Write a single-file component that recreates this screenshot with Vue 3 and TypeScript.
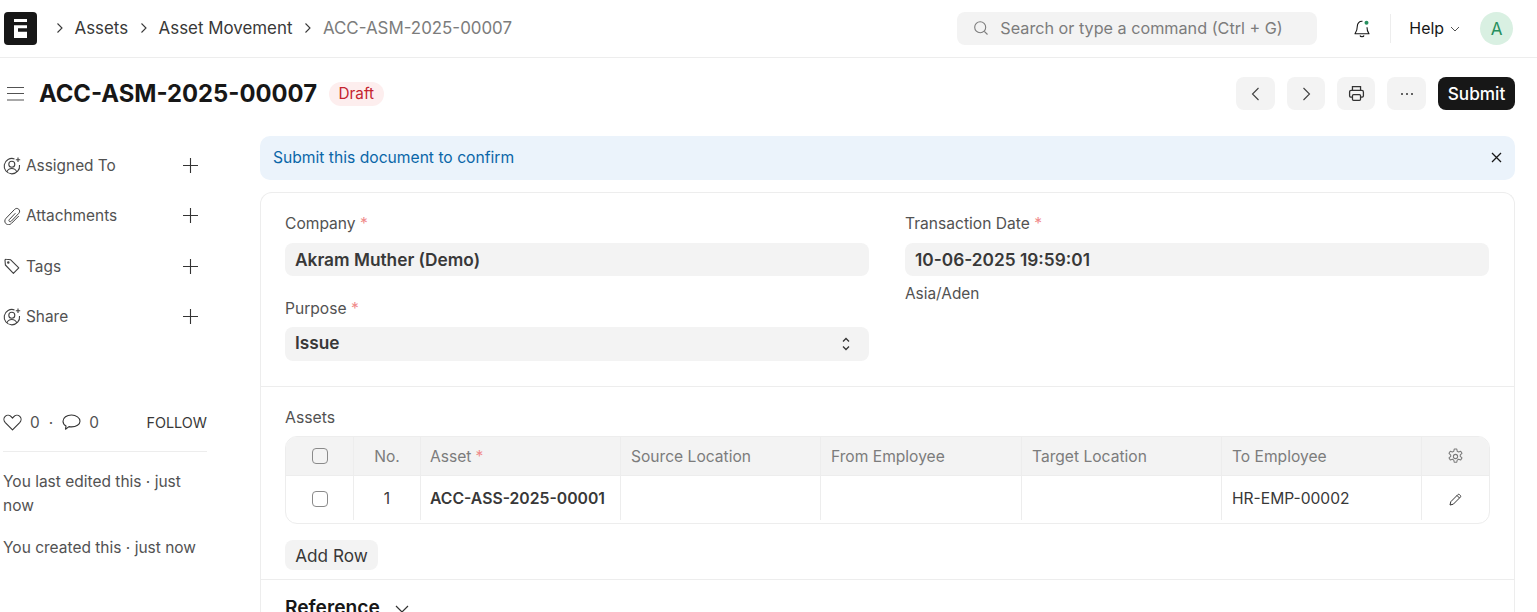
<template>
  <div class="page">
    <header class="navbar">
      <div class="logo">
        <svg width="13" height="19" viewBox="0 0 13 19"><path d="M0 0h13v3H0zM0 6.300h13v3H4v3.500h9V19H0z" fill="#fff" /></svg>
      </div>
      <nav class="crumbs">
        <svg class="crumb-arrow" width="8" height="12" viewBox="0 0 8 12"><path d="M1.500 1.500 6 6l-4.500 4.500" /></svg>
        <span class="crumb">Assets</span>
        <svg class="crumb-arrow" width="8" height="12" viewBox="0 0 8 12"><path d="M1.500 1.500 6 6l-4.500 4.500" /></svg>
        <span class="crumb">Asset Movement</span>
        <svg class="crumb-arrow" width="8" height="12" viewBox="0 0 8 12"><path d="M1.500 1.500 6 6l-4.500 4.500" /></svg>
        <span class="crumb crumb-last">ACC-ASM-2025-00007</span>
      </nav>
      <div class="search">
        <svg width="16" height="16" viewBox="0 0 16 16" fill="none" stroke="#7c7c7c" stroke-width="1.100"><circle cx="7.200" cy="7.200" r="5.500" /><path d="m11.300 11.300 3.200 3.200" /></svg>
        <span>Search or type a command (Ctrl + G)</span>
      </div>
      <div class="bell">
        <svg width="18" height="20" viewBox="0 0 18 20" fill="none" stroke="#171717" stroke-width="1.100">
          <path d="M9.500 2.300C6.300 2 4.300 4.400 4.300 7.300c0 4.500-1.800 6.400-2.300 7.400h14c-.5-1-2-2.500-2-6.500" stroke-linejoin="round" />
          <path d="M7 16.500c.4 1.600 3.600 1.600 4 0" />
          <circle cx="13.500" cy="3.700" r="2" fill="#278f5e" stroke="none" />
        </svg>
      </div>
      <div class="nav-divider"></div>
      <div class="help">
        Help
        <svg width="10" height="6" viewBox="0 0 10 6" fill="none" stroke="#525252"><path d="m1 1 4 4 4-4" /></svg>
      </div>
      <div class="avatar">A</div>
    </header>

    <div class="page-head">
      <div class="head-left">
        <svg class="menu-icon" width="17" height="15" viewBox="0 0 17 15" stroke="#525252" stroke-width="1.200"><path d="M0 1.500h17M0 7.500h17M0 14h17" /></svg>
        <h1>ACC-ASM-2025-00007</h1>
        <span class="badge">Draft</span>
      </div>
      <div class="head-actions">
        <button class="icon-btn nav-btn">
          <svg width="9" height="14" viewBox="0 0 9 14" fill="none" stroke="#404040" stroke-width="1.100"><path d="M7.500 1 1.500 7l6 6" /></svg>
        </button>
        <button class="icon-btn nav-btn">
          <svg width="9" height="14" viewBox="0 0 9 14" fill="none" stroke="#404040" stroke-width="1.100"><path d="m1.500 1 6 6-6 6" /></svg>
        </button>
        <button class="icon-btn">
          <svg width="17" height="17" viewBox="0 0 16 16" fill="none" stroke="#333" stroke-width="1.200"><path d="M4.200 5V1.500h7.600V5M4 11.500H2.500a1.500 1.500 0 0 1-1-1.300V6.500A1.500 1.500 0 0 1 3 5h10a1.500 1.500 0 0 1 1.500 1.500v3.700a1.500 1.500 0 0 1-1.200 1.300H12" /><rect x="4.200" y="9" width="7.600" height="5.500" rx="1" /></svg>
        </button>
        <button class="icon-btn more-btn">
          <svg width="14" height="4" viewBox="0 0 14 4" fill="#333"><circle cx="2" cy="2" r="1" /><circle cx="7" cy="2" r="1" /><circle cx="12" cy="2" r="1" /></svg>
        </button>
        <button class="submit-btn">Submit</button>
      </div>
    </div>

    <div class="body">
      <aside class="sidebar">
        <div v-for="item in sideItems" :key="item.label" class="side-row">
          <span class="side-label">
            <svg v-if="item.icon === 'user'" class="side-icon" width="18" height="18" viewBox="0 0 18 18" fill="none" stroke="#404040" stroke-width="1.100">
              <path d="M11.500 1.900A7.700 7.700 0 1 0 16.500 8" />
              <circle cx="8.800" cy="7.300" r="3" />
              <path d="M3.700 15c1-2.400 2.800-3.500 5.100-3.500s4.100 1.100 5.100 3.500" />
              <path d="M15 .5v4.500M12.800 2.800h4.400" />
            </svg>
            <svg v-else-if="item.icon === 'clip'" class="side-icon" width="18" height="18" viewBox="0 0 18 18" fill="none" stroke="#404040" stroke-width="1">
              <path d="M12.400 6.200 6.300 12.600c-1.200 1.400.6 2.900 2 1.600l7.500-7.900c2.600-2.900-1.500-6.700-4.200-3.900L3 11.300c-3.600 3.900 1.800 8.900 5.500 5L15.800 9" />
            </svg>
            <svg v-else class="side-icon" width="18" height="18" viewBox="0 0 18 18" fill="none" stroke="#404040" stroke-width="1.100" stroke-linejoin="round">
              <path d="M2 3.200 2.400 8l8 8.300 5.400-5.500L7.700 2.800l-4.500-.5A1 1 0 0 0 2 3.200z" />
              <circle cx="5.300" cy="5.600" r=".7" />
            </svg>
            {{ item.label }}
          </span>
          <svg width="15" height="15" viewBox="0 0 15 15" stroke="#333" stroke-width="1.100"><path d="M7.500 0v15M0 7.500h15" /></svg>
        </div>

        <div class="likes">
          <span class="like-group">
            <svg width="19" height="17" viewBox="0 0 19 17" fill="none" stroke="#333" stroke-width="1.100" stroke-linejoin="round"><path d="M9.500 15.800 2.300 8.600C.4 6.500.6 3.800 2.200 2.300c1.800-1.500 4.600-1.300 6.200.5l1.100 1.300 1.100-1.300c1.600-1.800 4.400-2 6.200-.5 1.600 1.500 1.800 4.200-.1 6.300z" /></svg>
            0
            <span class="dot">·</span>
            <svg width="19" height="17" viewBox="0 0 19 17" fill="none" stroke="#333" stroke-width="1.100" stroke-linejoin="round"><path d="M9.500 1C4.800 1 1 3.500 1 7.200c0 2 1.200 3.700 3 4.700l-.5 3.300 3.500-2.600c.8.200 1.600.3 2.500.3 4.700 0 8.500-2.400 8.500-5.700S14.200 1 9.500 1z" /></svg>
            0
          </span>
          <span class="follow">FOLLOW</span>
        </div>
        <div class="side-rule"></div>
        <p class="activity">You last edited this · just now</p>
        <p class="activity">You created this · just now</p>
      </aside>

      <main class="main">
        <div class="alert">
          <span>Submit this document to confirm</span>
          <svg width="11" height="11" viewBox="0 0 11 11" stroke="#171717" stroke-width="1.300"><path d="m1 1 9 9M10 1l-9 9" /></svg>
        </div>

        <div class="card">
          <section class="fields">
            <div class="col">
              <div class="field">
                <label>Company <i>*</i></label>
                <div class="input">Akram Muther (Demo)</div>
              </div>
              <div class="field field-purpose">
                <label>Purpose <i>*</i></label>
                <div class="input select">
                  Issue
                  <svg class="updown" width="10" height="16" viewBox="0 0 10 16" fill="none" stroke="#333" stroke-width="1.300"><path d="m2 5.500 3-3 3 3M2 10.500l3 3 3-3" /></svg>
                </div>
              </div>
            </div>
            <div class="col">
              <div class="field">
                <label>Transaction Date <i>*</i></label>
                <div class="input">10-06-2025 19:59:01</div>
                <div class="tz">Asia/Aden</div>
              </div>
            </div>
          </section>

          <section class="assets">
            <div class="assets-label">Assets</div>
            <div class="table">
              <div class="tr thead">
                <div class="td center"><span class="check"></span></div>
                <div class="td center">No.</div>
                <div class="td">Asset <i>*</i></div>
                <div v-for="h in headers" :key="h" class="td">{{ h }}</div>
                <div class="td center">
                  <svg width="17" height="17" viewBox="0 0 16 16" fill="none" stroke="#7c7c7c" stroke-width="1" stroke-linejoin="round">
                    <circle cx="8" cy="8" r="2" />
                    <path d="M6.800 1h2.400l.4 2 1.300.7 2-.7 1.200 2-1.600 1.400v1.500l1.600 1.400-1.200 2-2-.7-1.300.8-.4 2H6.800l-.4-2-1.300-.8-2 .7-1.200-2 1.600-1.400V6.600L1.900 5l1.200-2 2 .7 1.300-.7z" />
                  </svg>
                </div>
              </div>
              <div class="tr tbody">
                <div class="td center"><span class="check"></span></div>
                <div class="td center">1</div>
                <div class="td strong">ACC-ASS-2025-00001</div>
                <div class="td"></div>
                <div class="td"></div>
                <div class="td"></div>
                <div class="td">HR-EMP-00002</div>
                <div class="td center">
                  <svg class="pencil" width="13" height="13" viewBox="0 0 13 13" fill="none" stroke="#333" stroke-width="1" stroke-linejoin="round"><path d="M1 12l.8-3.300 7-7c.6-.5 1.300-.5 1.800 0l.7.700c.5.600.5 1.300 0 1.800l-7 7zM8 2.500l2.500 2.500" /></svg>
                </div>
              </div>
            </div>
            <button class="add-row">Add Row</button>
          </section>

          <section class="reference">
            <h2>Reference</h2>
            <svg class="ref-chevron" width="14" height="8" viewBox="0 0 14 8" fill="none" stroke="#333" stroke-width="1.200"><path d="m1 1 6 6 6-6" /></svg>
          </section>
        </div>
      </main>
    </div>
  </div>
</template>

<script setup lang="ts">
const sideItems = [
  { label: 'Assigned To', icon: 'user' },
  { label: 'Attachments', icon: 'clip' },
  { label: 'Tags', icon: 'tag' },
  { label: 'Share', icon: 'user' },
]

const headers = ['Source Location', 'From Employee', 'Target Location', 'To Employee']
</script>

<style>
html,
body {
  margin: 0;
  height: 612px;
  overflow: hidden;
  background: #fff;
}
</style>

<style scoped>
.page {
  font-family: Inter, 'Liberation Sans', sans-serif;
  color: #171717;
  height: 612px;
  overflow: hidden;
}

.navbar {
  display: flex;
  align-items: center;
  height: 57px;
  border-bottom: 1px solid #ededed;
  padding: 0 24px 0 4px;
}

.logo {
  width: 33px;
  height: 33px;
  border-radius: 4px;
  background: #171717;
  display: flex;
  align-items: center;
  justify-content: center;
}

.crumbs {
  display: flex;
  align-items: center;
  margin-left: 19px;
  font-size: 16.900px;
  line-height: 20px;
  margin-top: -1px;
  flex: 1;
}

.crumb-arrow {
  fill: none;
  stroke: #383838;
  stroke-width: 1.100;
  margin-right: 10.500px;
}

.crumb {
  color: #383838;
  margin-right: 12px;
}

.crumb-last {
  color: #7c7c7c;
}

.search {
  width: 360px;
  height: 33px;
  box-sizing: border-box;
  border-radius: 8px;
  background: #f3f3f3;
  display: flex;
  align-items: center;
  gap: 11px;
  padding: 0 0 1px 16px;
  color: #7c7c7c;
  font-size: 16.200px;
}

.bell {
  margin-left: 36px;
  display: flex;
}

.nav-divider {
  width: 1px;
  height: 29px;
  background: #ededed;
  margin-left: 19px;
}

.help {
  display: flex;
  align-items: center;
  gap: 6px;
  margin-left: 18px;
  font-size: 15.900px;
}

.avatar {
  width: 33px;
  height: 33px;
  border-radius: 50%;
  background: #d9f0e2;
  color: #278f5e;
  font-size: 17px;
  display: flex;
  align-items: center;
  justify-content: center;
  margin-left: 20px;
}

.page-head {
  display: flex;
  align-items: center;
  justify-content: space-between;
  height: 71px;
  padding: 0 22px 0 7px;
}

.head-left {
  display: flex;
  align-items: center;
}

.menu-icon {
  margin-right: 15px;
}

h1 {
  margin: 0;
  font-size: 23.800px;
  font-weight: 700;
  line-height: 30px;
  letter-spacing: 0;
}

.badge {
  margin-left: 12px;
  height: 24px;
  padding: 0 9.500px;
  border-radius: 12px;
  background: #fdeeee;
  color: #c4242f;
  font-size: 15.300px;
  display: flex;
  align-items: center;
}

.head-actions {
  display: flex;
  align-items: center;
  gap: 12px;
}

.icon-btn {
  width: 38px;
  height: 33px;
  border: 0;
  border-radius: 8px;
  background: #f3f3f3;
  display: flex;
  align-items: center;
  justify-content: center;
  padding: 0;
}

.nav-btn:first-child,
.more-btn {
  width: 39px;
}

.submit-btn {
  width: 77px;
  height: 33px;
  border: 0;
  border-radius: 8px;
  background: #171717;
  color: #fff;
  font: 500 17.200px Inter, 'Liberation Sans', sans-serif;
  padding: 0;
}

.body {
  display: flex;
  padding-right: 22px;
}

.sidebar {
  width: 207px;
  margin-right: 53px;
  flex: none;
  padding-top: 11.500px;
}

.side-row {
  display: flex;
  align-items: center;
  justify-content: space-between;
  height: 50.300px;
  padding: 0 9px 0 3px;
}

.side-label {
  display: flex;
  align-items: center;
  gap: 5px;
  font-size: 15.400px;
  color: #525252;
}

.side-label .side-icon {
  flex: none;
}

.likes {
  display: flex;
  align-items: center;
  justify-content: space-between;
  margin-top: 71.500px;
  padding-left: 3px;
  font-size: 15.400px;
  color: #525252;
}

.like-group {
  display: flex;
  align-items: center;
  gap: 8px;
}

.dot {
  margin: 0 1px;
}

.follow {
  color: #383838;
  font-size: 14.400px;
}

.side-rule {
  height: 1px;
  background: #ededed;
  margin: 19px 0 18px 3px;
}

.activity {
  margin: 0 0 18px 3px;
  font-size: 15.500px;
  line-height: 24px;
  color: #525252;
}

.main {
  flex: 1;
  min-width: 0;
  padding-top: 7px;
}

.alert {
  height: 44px;
  box-sizing: border-box;
  border-radius: 10px;
  background: #ebf3fb;
  color: #0a66a8;
  font-size: 15.650px;
  padding: 0 13px 1px;
  display: flex;
  align-items: center;
  justify-content: space-between;
}

.card {
  margin-top: 12px;
  border: 1px solid #ededed;
  border-bottom: 0;
  border-radius: 12px 12px 0 0;
}

.fields {
  display: grid;
  grid-template-columns: 584px 584px;
  column-gap: 36px;
  padding: 21px 24px 25px;
  border-bottom: 1px solid #ededed;
  height: 194px;
  box-sizing: border-box;
}

.field label {
  display: block;
  font-size: 15.600px;
  line-height: 20px;
  color: #525252;
  margin-bottom: 9px;
}

i {
  color: #f08a8a;
  font-style: normal;
}

.field-purpose {
  margin-top: 23px;
}

.input {
  height: 33px;
  border-radius: 8px;
  background: #f3f3f3;
  padding: 0 10px;
  font-size: 17.300px;
  font-weight: 600;
  color: #383838;
  display: flex;
  align-items: center;
}

.select {
  height: 34px;
  justify-content: space-between;
  margin-top: -1px;
  padding-right: 18px;
  padding-bottom: 3px;
  box-sizing: border-box;
}

.updown {
  margin-top: 3px;
}

.tz {
  margin-top: 7.500px;
  font-size: 15.400px;
  color: #525252;
}

.assets {
  padding: 21px 24px 9px 24px;
  height: 193px;
  box-sizing: border-box;
  border-bottom: 1px solid #ededed;
}

.assets-label {
  font-size: 15.800px;
  line-height: 20px;
  color: #525252;
  margin-bottom: 8px;
}

.table {
  border: 1px solid #ededed;
  border-radius: 12px;
  overflow: hidden;
}

.tr {
  display: grid;
  grid-template-columns: 68px 67px 200px 200px 201px 200px 200px 1fr;
}

.thead {
  height: 38px;
  background: #f3f3f3;
  color: #7c7c7c;
  border-bottom: 1px solid #ededed;
}

.tbody {
  height: 47px;
  color: #383838;
}

.td {
  border-right: 1px solid #ededed;
  font-size: 15.600px;
  padding: 0 10px;
  display: flex;
  align-items: center;
  gap: 4px;
  margin-bottom: 0;
}

.td:nth-child(3) {
  padding-left: 9px;
}

.td:last-child {
  border-right: 0;
}

.tbody .td {
  margin-bottom: 3px;
  padding-top: 1px;
}

.center {
  justify-content: center;
  padding: 0;
}

.strong {
  font-weight: 600;
  font-size: 15.750px;
}

.check {
  width: 16px;
  height: 16px;
  box-sizing: border-box;
  border: 1px solid #8a8a8a;
  border-radius: 4px;
  background: #fff;
}

.thead .check {
  background: transparent;
}

.pencil {
  margin-top: 2px;
}

.add-row {
  display: block;
  margin-top: 16px;
  width: 93px;
  height: 30px;
  border: 0;
  border-radius: 8px;
  background: #f3f3f3;
  color: #383838;
  font: 400 17.200px Inter, 'Liberation Sans', sans-serif;
  padding: 0;
}

.reference {
  display: flex;
  align-items: center;
  gap: 15px;
  padding: 15px 25px 0 24px;
}

.ref-chevron {
  margin-top: 4px;
}

h2 {
  margin: 0;
  font-size: 19.200px;
  line-height: 24px;
  font-weight: 600;
  color: #171717;
}
</style>
